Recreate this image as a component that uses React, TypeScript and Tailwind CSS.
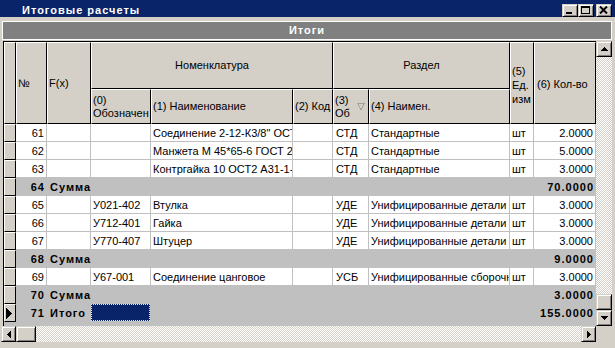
import React from 'react'

type Row =
  | { t: 'item'; n: number; code: string; name: string; sec: string; secName: string; unit: string; qty: string }
  | { t: 'sum'; n: number; qty: string }
  | { t: 'total'; n: number; qty: string }

const rows: Row[] = [
  { t: 'item', n: 61, code: '', name: 'Соединение 2-12-К3/8" ОСТ 26-07-1419-77', sec: 'СТД', secName: 'Стандартные', unit: 'шт', qty: '2.0000' },
  { t: 'item', n: 62, code: '', name: 'Манжета М 45*65-6 ГОСТ 22704-77', sec: 'СТД', secName: 'Стандартные', unit: 'шт', qty: '5.0000' },
  { t: 'item', n: 63, code: '', name: 'Контргайка 10 ОСТ2 А31-1-77', sec: 'СТД', secName: 'Стандартные', unit: 'шт', qty: '3.0000' },
  { t: 'sum', n: 64, qty: '70.0000' },
  { t: 'item', n: 65, code: 'У021-402', name: 'Втулка', sec: 'УДЕ', secName: 'Унифицированные детали', unit: 'шт', qty: '3.0000' },
  { t: 'item', n: 66, code: 'У712-401', name: 'Гайка', sec: 'УДЕ', secName: 'Унифицированные детали', unit: 'шт', qty: '3.0000' },
  { t: 'item', n: 67, code: 'У770-407', name: 'Штуцер', sec: 'УДЕ', secName: 'Унифицированные детали', unit: 'шт', qty: '3.0000' },
  { t: 'sum', n: 68, qty: '9.0000' },
  { t: 'item', n: 69, code: 'У67-001', name: 'Соединение цанговое', sec: 'УСБ', secName: 'Унифицированные сборочные единицы', unit: 'шт', qty: '3.0000' },
  { t: 'sum', n: 70, qty: '3.0000' },
  { t: 'total', n: 71, qty: '155.0000' },
]

const COLS = 'grid grid-cols-[12px_31px_44px_60px_142px_40px_36px_141px_24px_62px]'
const HDR =
  'bg-[#d4d0c8] border border-t-white border-l-white border-r-black border-b-black overflow-hidden whitespace-nowrap'
const BTN =
  'bg-[#d4d0c8] border border-t-[#d4d0c8] border-l-[#d4d0c8] border-r-black border-b-black shadow-[inset_1px_1px_#fff,inset_-1px_-1px_#808080] flex items-center justify-center'
const CELL = 'bg-white border-r border-b border-[#c0c0c0] overflow-hidden whitespace-nowrap leading-[17px] pt-[1px]'
const GRAY = 'bg-[#c0c0c0] border-r border-b border-[#c0c0c0] overflow-hidden whitespace-nowrap leading-[17px] pt-[1px]'
const BOLD = 'font-bold tracking-[1px]'
const DITHER = 'bg-[image:repeating-conic-gradient(#ffffff_0_25%,#d4d0c8_0_50%)] bg-size-[2px_2px]'

function Indicator({ active }: { active?: boolean }) {
  return (
    <div className={HDR + ' flex items-center'}>
      {active && (
        <svg width="6" height="11" viewBox="0 0 6 11" className="ml-[1px]" shapeRendering="crispEdges">
          <path d="M0 0 L6 5.5 L0 11 Z" fill="#000" />
        </svg>
      )}
    </div>
  )
}

function Arrow({ dir }: { dir: 'up' | 'down' | 'left' | 'right' }) {
  const d = {
    up: 'M0 4 L3.5 0 L7 4 Z',
    down: 'M0 0 L7 0 L3.5 4 Z',
    left: 'M4 0 L4 7 L0 3.5 Z',
    right: 'M0 0 L4 3.5 L0 7 Z',
  }[dir]
  const v = dir === 'up' || dir === 'down'
  return (
    <svg width={v ? 7 : 4} height={v ? 4 : 7} viewBox={v ? '0 0 7 4' : '0 0 4 7'} shapeRendering="crispEdges">
      <path d={d} fill="#000" />
    </svg>
  )
}

export default function App() {
  return (
    <div className="w-[615px] h-[348px] bg-[#d4d0c8] font-['Liberation_Sans',Arial,sans-serif] text-[11px] text-black overflow-hidden">
      {/* Заголовок окна */}
      <div className="h-[17px] bg-[#0a246a] flex items-start justify-between">
        <span className={'text-white pl-[22px] pt-[4px] leading-[13px] ' + BOLD}>Итоговые расчеты</span>
        <div className="flex mt-[4px] mr-[3px]">
          <div className={BTN + ' w-[16px] h-[13px]'}>
            <svg width="14" height="11" viewBox="0 0 14 11" shapeRendering="crispEdges">
              <rect x="3" y="7" width="6" height="2" fill="#000" />
            </svg>
          </div>
          <div className={BTN + ' w-[16px] h-[13px]'}>
            <svg width="14" height="11" viewBox="0 0 14 11" shapeRendering="crispEdges">
              <rect x="2.5" y="1.5" width="8" height="7" fill="none" stroke="#000" />
              <rect x="2" y="1" width="9" height="2" fill="#000" />
            </svg>
          </div>
          <div className={BTN + ' w-[16px] h-[13px] ml-[2px]'}>
            <svg width="14" height="11" viewBox="0 0 14 11">
              <path d="M3 1.5 L10 8.5 M10 1.5 L3 8.5" stroke="#000" strokeWidth="1.8" />
            </svg>
          </div>
        </div>
      </div>

      {/* Полоса "Итоги" */}
      <div className="mt-[4px] ml-[2px] w-[610px] h-[19px] bg-[#808080] border border-white flex items-center justify-center">
        <span className={'text-white leading-[13px] ' + BOLD}>Итоги</span>
      </div>

      <div className="mt-[1px] ml-[1px] flex">
        <div className="w-[595px] flex flex-col">
          {/* Таблица */}
          <div className="ml-[2px] w-[593px] h-[285px] border-t border-l border-black bg-[#c0c0c0] overflow-hidden">
            <div className={COLS + ' grid-rows-[47px_35px]'}>
              <div className={HDR + ' row-span-2'} />
              <div className={HDR + ' row-span-2 flex items-center pl-[1px]'}>№</div>
              <div className={HDR + ' row-span-2 flex items-center pl-[1px]'}>F(x)</div>
              <div className={HDR + ' col-span-3 flex items-center justify-center'}>Номенклатура</div>
              <div className={HDR + ' col-span-2 flex items-center justify-center'}>Раздел</div>
              <div className={HDR + ' row-span-2 flex flex-col justify-center pl-[1px] pt-[4px] leading-[14px]'}>
                <span>(5)</span>
                <span>Ед.</span>
                <span>изм</span>
              </div>
              <div className={HDR + ' row-span-2 flex items-center pl-[2px] pt-[2px]'}>(6) Кол-во</div>
              <div className={HDR + ' flex flex-col justify-center pl-[1px] leading-[13px]'}>
                <span>(0)</span>
                <span>Обозначен</span>
              </div>
              <div className={HDR + ' flex items-center pl-[1px]'}>(1) Наименование</div>
              <div className={HDR + ' flex items-center pl-[1px]'}>(2) Код</div>
              <div className={HDR + ' flex items-center justify-between pl-[1px] pr-[3px]'}>
                <div className="flex flex-col leading-[13px]">
                  <span>(3)</span>
                  <span>Об</span>
                </div>
                <svg width="8" height="7" viewBox="0 0 8 7" shapeRendering="crispEdges">
                  <path d="M0.5 0.5 L7.5 0.5 L4 6.5 Z" fill="none" stroke="#a0a0a0" />
                </svg>
              </div>
              <div className={HDR + ' flex items-center pl-[1px]'}>(4) Наимен.</div>
            </div>

            <div className={COLS + ' auto-rows-[18px]'}>
              {rows.map((r) => {
                if (r.t === 'item') {
                  return (
                    <React.Fragment key={r.n}>
                      <Indicator />
                      <div className={CELL + ' text-right pr-[2px]'}>{r.n}</div>
                      <div className={CELL} />
                      <div className={CELL + ' pl-[2px]'}>{r.code}</div>
                      <div className={CELL + ' pl-[2px]'}>{r.name}</div>
                      <div className={CELL} />
                      <div className={CELL + ' pl-[3px]'}>{r.sec}</div>
                      <div className={CELL + ' pl-[2px]'}>{r.secName}</div>
                      <div className={CELL + ' pl-[2px]'}>{r.unit}</div>
                      <div className={CELL + ' text-right pr-[2px]'}>{r.qty}</div>
                    </React.Fragment>
                  )
                }
                if (r.t === 'sum') {
                  return (
                    <React.Fragment key={r.n}>
                      <Indicator />
                      <div className={GRAY + ' text-right pr-[1px] ' + BOLD}>{r.n}</div>
                      <div className={GRAY + ' col-span-8 flex justify-between pl-[3px] pr-[1px] ' + BOLD}>
                        <span>Сумма</span>
                        <span>{r.qty}</span>
                      </div>
                    </React.Fragment>
                  )
                }
                return (
                  <React.Fragment key={r.n}>
                    <Indicator active />
                    <div className={GRAY + ' text-right pr-[1px] ' + BOLD}>{r.n}</div>
                    <div className={GRAY + ' pl-[3px] ' + BOLD}>Итого</div>
                    <div className="bg-[#0a246a] border border-dotted border-[#f0f0b0] mr-[1px] mb-[1px]" />
                    <div className={GRAY + ' col-span-6 text-right pr-[1px] ' + BOLD}>{r.qty}</div>
                  </React.Fragment>
                )
              })}
            </div>
          </div>

          {/* Горизонтальная прокрутка */}
          <div className={'h-[16px] flex ' + DITHER}>
            <div className={BTN + ' w-[15px]'}>
              <Arrow dir="left" />
            </div>
            <div className={BTN + ' w-[20px]'} />
            <div className="flex-1" />
            <div className={BTN + ' w-[15px]'}>
              <Arrow dir="right" />
            </div>
          </div>
        </div>

        {/* Вертикальная прокрутка */}
        <div className="w-[16px] flex flex-col">
          <div className={'h-[285px] flex flex-col ' + DITHER}>
            <div className={BTN + ' h-[16px]'}>
              <Arrow dir="up" />
            </div>
            <div className="flex-1" />
            <div className={BTN + ' h-[16px]'} />
            <div className={BTN + ' h-[16px]'}>
              <Arrow dir="down" />
            </div>
          </div>
          <div className="h-[16px] bg-[#d4d0c8]" />
        </div>
      </div>
    </div>
  )
}
